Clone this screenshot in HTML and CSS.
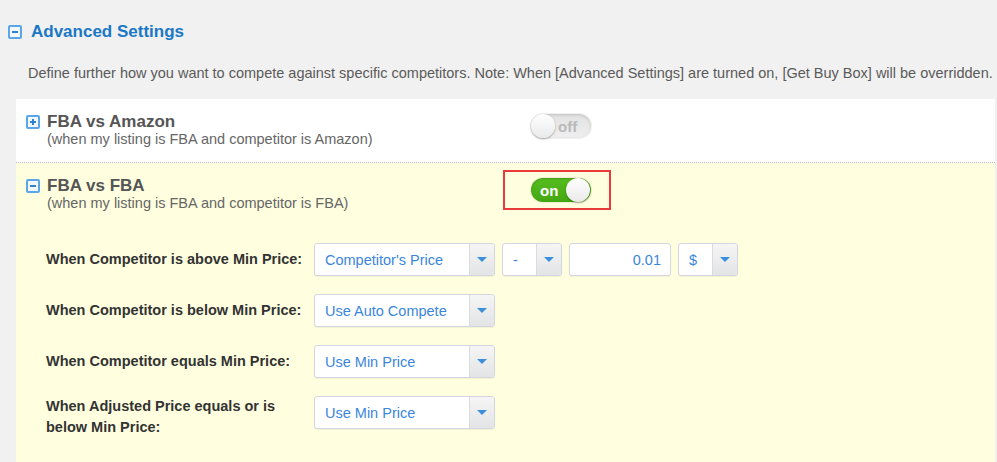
FILE: index.html
```html
<!DOCTYPE html>
<html>
<head>
<meta charset="utf-8">
<link rel="stylesheet" href="styles.css">
</head>
<body>
<div class="page">
  <div class="heading">
    <span class="box-icon"><span class="bar"></span></span>
    <h2 class="heading-title">Advanced Settings</h2>
  </div>
  <p class="desc">Define further how you want to compete against specific competitors. Note: When [Advanced Settings] are turned on, [Get Buy Box] will be overridden.</p>

  <div class="panel">
    <div class="section section--white">
      <div class="section-head">
        <div class="section-info">
          <span class="box-icon box-icon--small"><span class="bar"></span><span class="bar bar--v"></span></span>
          <div class="section-text">
            <div class="section-title">FBA vs Amazon</div>
            <div class="section-sub">(when my listing is FBA and competitor is Amazon)</div>
          </div>
        </div>
        <div class="toggle-box">
          <div class="toggle toggle--off"><span class="knob"></span><span class="toggle-label">off</span></div>
        </div>
      </div>
    </div>

    <div class="section section--yellow">
      <div class="section-head">
        <div class="section-info">
          <span class="box-icon box-icon--small"><span class="bar"></span></span>
          <div class="section-text">
            <div class="section-title">FBA vs FBA</div>
            <div class="section-sub">(when my listing is FBA and competitor is FBA)</div>
          </div>
        </div>
        <div class="toggle-box toggle-box--active">
          <div class="toggle toggle--on"><span class="toggle-label">on</span><span class="knob"></span></div>
        </div>
      </div>

      <div class="rows">
        <div class="row">
          <div class="row-label">When Competitor is above Min Price:</div>
          <div class="controls">
            <div class="select select--wide"><span class="select-value">Competitor's Price</span><span class="select-arrow"><span class="tri"></span></span></div>
            <div class="select select--tiny"><span class="select-value">-</span><span class="select-arrow"><span class="tri"></span></span></div>
            <div class="input">0.01</div>
            <div class="select select--tiny"><span class="select-value">$</span><span class="select-arrow"><span class="tri"></span></span></div>
          </div>
        </div>
        <div class="row">
          <div class="row-label">When Competitor is below Min Price:</div>
          <div class="controls">
            <div class="select select--wide"><span class="select-value">Use Auto Compete</span><span class="select-arrow"><span class="tri"></span></span></div>
          </div>
        </div>
        <div class="row">
          <div class="row-label">When Competitor equals Min Price:</div>
          <div class="controls">
            <div class="select select--wide"><span class="select-value">Use Min Price</span><span class="select-arrow"><span class="tri"></span></span></div>
          </div>
        </div>
        <div class="row row--top">
          <div class="row-label">When Adjusted Price equals or is below Min Price:</div>
          <div class="controls">
            <div class="select select--wide"><span class="select-value">Use Min Price</span><span class="select-arrow"><span class="tri"></span></span></div>
          </div>
        </div>
      </div>
    </div>
  </div>
</div>
</body>
</html>
```

FILE: styles.css
```css
* { box-sizing: border-box; }
html, body {
  margin: 0;
  padding: 0;
  height: 100%;
}
body {
  background: #f1f1f1;
  font-family: "Liberation Sans", Arial, sans-serif;
  color: #555;
  overflow: hidden;
}
.page {
  display: flex;
  flex-direction: column;
  min-height: 100%;
}
.heading {
  display: flex;
  align-items: center;
  gap: 9px;
  padding: 22px 0 0 8px;
  height: 41px;
}
.heading-title {
  margin: 0;
  font-size: 17px;
  font-weight: bold;
  color: #1a78c6;
  line-height: 19px;
}
.box-icon {
  width: 14px;
  height: 14px;
  border: 2px solid #5aa6e8;
  border-radius: 2px;
  background: #f3f8fd;
  position: relative;
  flex: none;
}
.bar {
  position: absolute;
  left: 2px;
  right: 2px;
  top: 4px;
  height: 2px;
  background: #2f82d0;
}
.bar--v {
  left: 4px;
  right: auto;
  width: 2px;
  top: 2px;
  height: 6px;
}
.desc {
  margin: 0;
  padding: 24px 0 0 28px;
  font-size: 14.5px;
  line-height: 17px;
  color: #5a5a5a;
  white-space: nowrap;
}
.panel {
  margin: 17px 2px 0 16px;
  flex: 1;
  display: flex;
  flex-direction: column;
}
.section--white {
  background: #fff;
  padding: 13px 10px 14px;
  border-bottom: 1px dotted #b9b9b9;
}
.section--yellow {
  background: #ffffe0;
  padding: 13px 10px 0;
  flex: 1;
}
.section-head {
  display: flex;
  align-items: flex-start;
}
.section-info {
  display: flex;
  align-items: flex-start;
  gap: 7px;
  width: 477px;
}
.section-info .box-icon {
  margin-top: 3px;
}
.section-title {
  font-size: 17px;
  font-weight: bold;
  line-height: 19px;
  color: #555;
}
.section-sub {
  font-size: 14.5px;
  line-height: 17px;
  color: #666;
}
.toggle-box {
  width: 108px;
  height: 40px;
  margin-top: -6px;
  border: 2px solid transparent;
  padding: 0 0 0 26px;
  display: flex;
  align-items: center;
}
.toggle-box--active {
  border-color: #ea3b3b;
}
.toggle {
  width: 60px;
  height: 24px;
  border-radius: 12px;
  display: flex;
  align-items: center;
  position: relative;
}
.toggle--off {
  background: linear-gradient(#e2e2e2, #efefef);
  box-shadow: inset 0 1px 3px rgba(0,0,0,0.15), 0 0 0 1px #f0f0f0;
}
.toggle--on {
  background: linear-gradient(#57bd1f, #44a712);
  box-shadow: inset 0 1px 2px rgba(0,0,0,0.2), 0 0 0 1px #eeeed0;
  justify-content: space-between;
}
.knob {
  width: 24px;
  height: 24px;
  border-radius: 50%;
  background: linear-gradient(#ffffff, #e9e9e9);
  box-shadow: 0 1px 2px rgba(0,0,0,0.35);
  flex: none;
}
.toggle-label {
  font-size: 15px;
  font-weight: bold;
}
.toggle--off .toggle-label {
  color: #b9b9b9;
  margin-left: 3px;
}
.toggle--on .toggle-label {
  color: #fff;
  margin-left: 9px;
}
.toggle--on .knob {
  margin-right: 1px;
}
.rows {
  display: flex;
  flex-direction: column;
  gap: 18px;
  padding: 31px 0 0 20px;
}
.row {
  display: flex;
  align-items: center;
}
.row--top {
  align-items: flex-start;
}
.row-label {
  width: 260px;
  margin-right: 8px;
  font-size: 14.5px;
  font-weight: bold;
  line-height: 21px;
  color: #333;
}
.controls {
  display: flex;
  gap: 7px;
}
.select, .input {
  height: 33px;
  border: 1px solid #d3d6df;
  border-radius: 3px;
  background: #fff;
  box-shadow: 0 1px 1px rgba(0,0,0,0.06);
  display: flex;
  align-items: stretch;
  font-size: 14.5px;
  color: #3a86dc;
  overflow: hidden;
}
.select--wide { width: 181px; }
.select--tiny { width: 60px; }
.select-value {
  flex: 1;
  display: flex;
  align-items: center;
  padding-left: 10px;
}
.select-arrow {
  width: 25px;
  border-left: 1px solid #d9dbe0;
  background: linear-gradient(#f5f5f5, #e3e4e6);
  display: flex;
  align-items: center;
  justify-content: center;
}
.tri {
  width: 0;
  height: 0;
  border-left: 5px solid transparent;
  border-right: 5px solid transparent;
  border-top: 5px solid #3c8fdc;
}
.input {
  width: 102px;
  justify-content: flex-end;
  align-items: center;
  padding-right: 9px;
}
```
